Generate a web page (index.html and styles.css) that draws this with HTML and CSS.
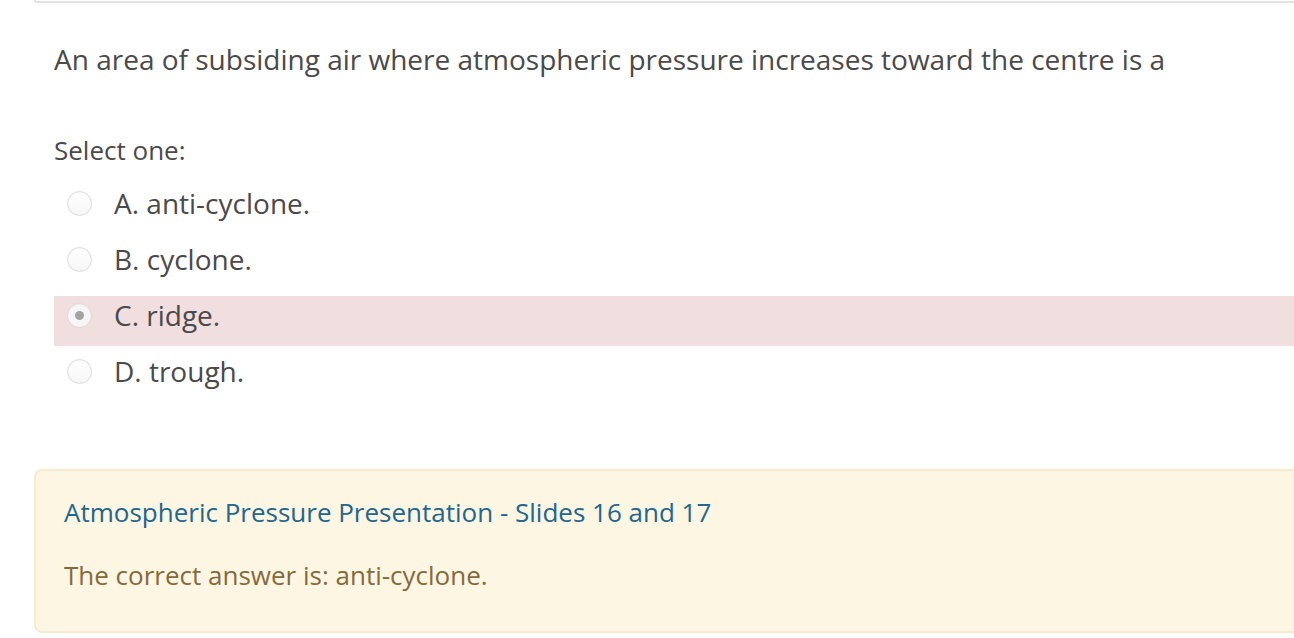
FILE: index.html
```html
<!DOCTYPE html>
<html lang="en">
<head>
<meta charset="utf-8">
<title>Question</title>
<link rel="stylesheet" href="styles.css">
</head>
<body>
<div class="que">
  <div class="prev-box"></div>
  <div class="formulation">
    <p class="qtext">An area of subsiding air where atmospheric pressure increases toward the centre is a</p>
    <p class="prompt">Select one:</p>
    <div class="answer">
      <div class="opt"><span class="radio"></span><span class="label">A. anti-cyclone.</span></div>
      <div class="opt"><span class="radio"></span><span class="label">B. cyclone.</span></div>
      <div class="opt opt-incorrect"><span class="radio radio-checked"></span><span class="label">C. ridge.</span></div>
      <div class="opt"><span class="radio"></span><span class="label">D. trough.</span></div>
    </div>
  </div>
  <div class="outcome">
    <p class="feedback"><a class="fb-link" href="#">Atmospheric Pressure Presentation - Slides 16 and 17</a></p>
    <p class="rightanswer">The correct answer is: anti-cyclone.</p>
  </div>
</div>
</body>
</html>
```
FILE: styles.css
```css
html, body {
  margin: 0;
  padding: 0;
  background: #fff;
  overflow: hidden;
}
body {
  font-family: "Open Sans", "Noto Sans", sans-serif;
  font-size: 26px;
  line-height: 39px;
  color: #4a4a4a;
}
.que {
  width: 1340px;
}
.prev-box {
  margin-left: 34px;
  height: 1px;
  border-left: 2px solid #e2e2e2;
  border-bottom: 2px solid #e2e2e2;
  border-bottom-left-radius: 6px;
}
.formulation {
  padding-left: 54px;
}
.qtext {
  margin: 35px 0 0 0;
  font-size: 28px;
  line-height: 42px;
}
.prompt {
  margin: 51px 0 0 0;
}
.answer {
  margin-top: 13px;
  display: flex;
  flex-direction: column;
  gap: 6.33px;
}
.opt {
  height: 50px;
  display: flex;
  align-items: center;
  font-size: 28px;
}
.opt-incorrect {
  background: #f1dede;
}
.radio {
  width: 23px;
  height: 23px;
  margin-left: 13px;
  margin-right: 22px;
  border-radius: 50%;
  border: 1px solid #dcdcdc;
  background: linear-gradient(#ffffff, #f7f7f7);
  box-shadow: inset 0 1px 1px rgba(0,0,0,0.04);
  display: flex;
  align-items: center;
  justify-content: center;
  flex: none;
  position: relative;
  top: -5px;
}
.radio-checked {
  background: #f6f6f6;
  border-color: #e0dada;
}
.radio-checked::after {
  content: "";
  width: 9px;
  height: 9px;
  border-radius: 50%;
  background: #a3a3a3;
}
.label {
  position: relative;
  top: -5px;
}
.outcome {
  margin: 67px 0 0 34px;
  background: #fcf6e3;
  border: 2px solid #f8ead0;
  border-radius: 8px;
  padding: 22px 28px 36px 28px;
  color: #876a3b;
}
.feedback {
  margin: 0;
}
.fb-link {
  color: #23668f;
  text-decoration: none;
}
.rightanswer {
  margin: 24px 0 0 0;
}
```
